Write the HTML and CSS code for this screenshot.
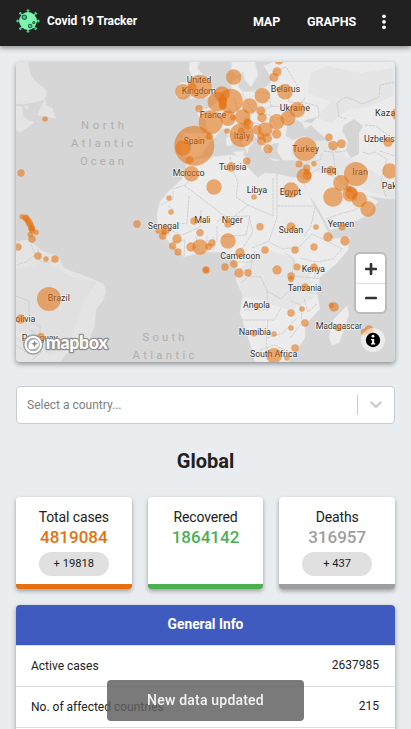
FILE: index.html
```html
<!DOCTYPE html>
<html lang="en">
<head>
<meta charset="utf-8">
<title>Covid 19 Tracker</title>
<link rel="stylesheet" href="styles.css">
</head>
<body>
<header class="navbar">
  <a class="brand">
    <svg class="brand-icon" viewBox="0 0 24 24">
      <g stroke="#3fd692" stroke-width="1.3" stroke-linecap="round">
        <path d="M12 1.5v21M1.5 12h21M4.2 4.2l15.6 15.6M19.8 4.2L4.2 19.8"/>
        <path d="M11.4 1.4h1.2M11.4 22.6h1.2M1.4 11.4v1.2M22.6 11.4v1.2M3.8 4.6l.8-.8M19.4 3.8l.8.8M3.8 19.4l.8.8M20.2 19.4l-.8.8" stroke-width="1.8"/>
      </g>
      <circle cx="12" cy="12" r="8.9" fill="#7df5ac"/>
      <g fill="#43c98a" stroke="#256b51" stroke-width="1.1">
        <circle cx="8.3" cy="8.2" r="2.2"/><circle cx="14.2" cy="17" r="1.8"/><circle cx="17.8" cy="13.6" r="1.1"/>
      </g>
    </svg>
    <span>Covid 19 Tracker</span>
  </a>
  <nav class="nav-links">
    <a class="link-map">MAP</a>
    <a class="link-graphs">GRAPHS</a>
    <svg class="more" viewBox="0 0 4 16"><circle cx="2" cy="2.3" r="1.9"/><circle cx="2" cy="7.8" r="1.9"/><circle cx="2" cy="13.3" r="1.9"/></svg>
  </nav>
</header>
<main>
  <section class="map">
    <svg class="map-canvas" viewBox="16 62 379 300">
      <g class="land">
        <path class="land-west" d="M16 62H28L30 74 36 82 46 90 46 97 40 101 30 103 16 104Z"/>
        <path class="land-west" d="M45 99L46 106 52 108 55 118 49 117 38 115 41 107Z"/>
        <path class="land-west" d="M16 106l6 1 1 9 6 5 5 1-6 5-8 5-4-3zM24 106l4 1-1 2z"/>
        <path class="land-west" d="M16 242L27 240 36 246 44 252 58 256 63 267 70 271 90 278 103 284 106 291 103 300 96 309 94 327 88 341 73 348 65 355 60 362H16Z"/>
        <path d="M190 62L200 62 197 68 203 75 207 83 214 90 210 97 199 98 190 99 195 93 190 87 194 79 189 70Z"/>
        <path d="M180 83l7-1 2 9-5 6-8 1 1-9z"/>
        <path d="M238 62H255L258 75 251 87 245 80 243 72 237 75 231 70 232 62Z"/>
        <path d="M395 62H274L264 66 269 74 273 79 266 87 255 91 243 92 238 87 239 78 232 81 231 91 223 98 215 104 207 109 196 109 198 115 207 121 205 134 184 133 181 145 182 155 190 159 202 155 207 146 215 137 222 129 230 129 237 139 244 145 247 153 249 147 253 143 246 136 239 127 243 124 251 132 259 140 263 151 269 154 268 147 274 143 279 143 277 151 283 160 292 160 302 161 306 165 304 181 308 194 317 206 324 219 330 230 343 226 358 220 369 214 378 201 366 195 360 190 355 197 346 189 343 181 350 184 358 192 369 196 382 198 395 199Z"/>
        <path d="M233 152l11-1-1 6-6-2zM226 138l5-1 1 8-5 1zM227 132l3-1v5l-2 1zM269 158l11 2-5 1zM295 163l6-2-3 4z"/>
        <path d="M188 160L205 158 228 155 246 156 247 167 258 178 264 173 277 174 290 177 302 178 305 187 313 204 321 218 328 232 331 239 350 237 348 250 336 264 320 277 317 294 320 309 305 325 305 338 297 349 288 362H255L250 343 240 313 243 296 236 280 237 265 231 255 221 252 202 252 184 257 172 245 158 230 157 214 160 202 168 192 182 179Z"/>
        <path d="M347 306l2 8-5 15-5 14-7 2-3-8 4-17z"/>
      </g>
      <g class="relief">
        <path d="M16 270l28-8 28 15 25 5-14 20-12 35-20 20-20-22-15-5z"/>
        <path d="M237 270l27-21 25 7 20 17 5 25-24 12-29-9-19-5z"/>
        <path d="M291 146l36-9 20 20 24 13 23 15v14l-29-9-31-14-29-7-14-12z"/>
        <path d="M310 73l17-7 34 7 32-5v28l-24 11-20 2-18 14-15-5 14-16-22-9z"/>
      </g>
      <g class="water">
        <path d="M287 125L297 120 302 123 305 129 311 125 318 132 328 140 316 141 304 136 293 140 286 136Z"/>
        <path d="M344 125l10-6 9 7-4 7 0 7 0 14-8 4-5-8 2-9-6-10z"/>
        <path d="M303 122l5-3 8-1-4 5zM308 268l3-1 1 6-4 1zM298 280l3 13-2-1z"/>
      </g>
      <g class="borders">
        <path d="M184 136l5 1v17M205 137l12 3M220 98l12 15-5 12M234 98l4 13M242 93l12 20-13 6M254 92l15 1 2 14-12 5M269 85l10 5 9-6 1 18 12 1 5-6M273 72l13-5 8 13 6 10M271 106l14 1 5 11M257 113l13 2 7 12M301 102l17 4 1 10-9 5M250 122l9 2 4 9M262 134l13-3"/>
        <path d="M395 82l-15 3-1 12-16 7-17-7-9 6 2 14 8 2M365 125l11 1 19 15M363 152l6 2 6-2 12 7-6 22 5 16M380 151l15 5M324 151l9 1 2 17 7 12M305 163l15-3 2-7M305 177l15-9 15 10 8 5M326 140l10 12 11-1M326 219l17-6 12-3 13-8M355 201l7-4"/>
        <path d="M192 176l-6 9-14 4M173 191v8l-12 6M185 186l45 34 18-15M230 157l3 14 5 11-2 15 12 8 25 11V178M277 174v43M277 206h37M189 196l-2 27-20 2M168 206l6 4M201 210l-1 17-18 8-12-5M217 226v16M217 222l6-5 27-1-4 19-24 2M249 217l4 15-12 19M277 217l-8 24-17 7M315 207l-4 19-7 10M269 242l13 7 17-2 13-13 17 8 13 7-9 10-17 3-16-4M184 256l1-16-14 2M198 251l-2-15M207 250v-15M214 250l-1-13"/>
        <path d="M238 262h13l4-11M252 260l-2 15-9 8M285 253l9 6-4 31-9 9-14-8-6-14-15-1M294 276l27 3M290 289l29 5M267 291l1 19h-24M241 320h33l7-12M268 320l-2 22 3 17M267 338l16-5 14-15M291 301l10 4 1 18-12 15M304 299l4 13 9-8M260 350l14-5 11 5M314 264l1 14"/>
        <path d="M31 244l4 11-9 7-10 3M38 249l2 12 9 2 7-4M16 296l13 5v14l-8 7M29 322l11 4v10l-11-7M16 338l12 8 10-3 3 9-9 8M16 345l13 9"/>
      </g>
      <g class="labels">
        <text x="186.7" y="83" textLength="24.6">United</text>
        <text x="181.7" y="94" textLength="34.3">Kingdom</text>
        <text x="199.7" y="118" textLength="26.5">France</text>
        <text x="183.7" y="144" textLength="21">Spain</text>
        <text x="233.7" y="139" textLength="16.2">Italy</text>
        <text x="219" y="170" textLength="27.5">Tunisia</text>
        <text x="172.7" y="176" textLength="32">Morocco</text>
        <text x="246.7" y="193" textLength="20.5">Libya</text>
        <text x="270.7" y="92" textLength="29.5">Belarus</text>
        <text x="279.7" y="111.3" textLength="30.3">Ukraine</text>
        <text x="375" y="116.3" textLength="48">Kazakhstan</text>
        <text x="364" y="142.3" textLength="43">Uzbekistan</text>
        <text x="292.3" y="152.3" textLength="26.7">Turkey</text>
        <text x="321.3" y="173.3" textLength="15">Iraq</text>
        <text x="352.3" y="175.2" textLength="15.7">Iran</text>
        <text x="381.7" y="189.3" textLength="35">Pakistan</text>
        <text x="279.7" y="194.6" textLength="21.5">Egypt</text>
        <text x="47.7" y="300.7" textLength="22.3">Brazil</text>
        <text x="9.8" y="322.2" textLength="25.5">Bolivia</text>
        <text x="21.7" y="341" textLength="36">Paraguay</text>
        <text x="147.7" y="229.2" textLength="31.3">Senegal</text>
        <text x="194.3" y="223" textLength="16">Mali</text>
        <text x="221.7" y="223" textLength="21">Niger</text>
        <text x="220.3" y="259.3" textLength="40">Cameroon</text>
        <text x="243" y="308" textLength="27">Angola</text>
        <text x="238.7" y="335" textLength="32.3">Namibia</text>
        <text x="250" y="357.3" textLength="47.3">South Africa</text>
        <text x="278.7" y="233.3" textLength="24.6">Sudan</text>
        <text x="327.7" y="227.2" textLength="26.6">Yemen</text>
        <text x="301.7" y="271.7" textLength="23.3">Kenya</text>
        <text x="287.7" y="290.8" textLength="34">Tanzania</text>
        <text x="315.7" y="329.3" textLength="46.3">Madagascar</text>
      </g>
      <g class="ocean">
        <text x="81" y="129" textLength="43">North</text>
        <text x="71" y="147" textLength="62">Atlantic</text>
        <text x="80" y="165" textLength="44">Ocean</text>
        <text x="142.5" y="341" textLength="42">South</text>
        <text x="132.5" y="359" textLength="62">Atlantic</text>
      </g>
      <g class="cases">
        <circle cx="45" cy="119" r="2.8"/><circle cx="21" cy="173" r="3.7"/>
        <circle cx="233.7" cy="77" r="7.7"/><circle cx="199.7" cy="86.7" r="12"/><circle cx="183" cy="91.7" r="7.7"/><circle cx="192.7" cy="86.7" r="3.7"/>
        <circle cx="217.3" cy="101.7" r="9.8"/><circle cx="222" cy="94" r="7.7"/><circle cx="230.5" cy="101" r="12.3"/><circle cx="222.7" cy="101" r="3.8"/><circle cx="222.7" cy="106" r="3.8"/>
        <circle cx="262.3" cy="95.7" r="7.7"/><circle cx="199" cy="108.7" r="3.7"/><circle cx="210.7" cy="122.3" r="12"/><circle cx="228" cy="118.3" r="7.7"/><circle cx="233" cy="117.7" r="2.8"/>
        <circle cx="249.7" cy="106" r="7.7"/><circle cx="242.7" cy="117" r="7.7"/><circle cx="260.7" cy="110.7" r="4.5"/><circle cx="262" cy="117.7" r="4.7"/><circle cx="248.3" cy="124.5" r="5"/><circle cx="247.3" cy="121.7" r="3.7"/>
        <circle cx="227" cy="131" r="2.8"/><circle cx="241.7" cy="135" r="12"/><circle cx="241" cy="131" r="3.3"/><circle cx="241" cy="139" r="2.3"/><circle cx="256.7" cy="129.7" r="4.7"/><circle cx="265.3" cy="129.5" r="7.3"/><circle cx="276.7" cy="121.7" r="7.7"/>
        <circle cx="276.7" cy="134" r="4.7"/><circle cx="261.7" cy="141" r="4.5"/><circle cx="267.3" cy="138.3" r="4.7"/><circle cx="260.7" cy="136" r="3.7"/><circle cx="268" cy="149" r="4.7"/>
        <circle cx="194.3" cy="145.7" r="20"/><circle cx="183" cy="148" r="7.7"/><circle cx="189.7" cy="160" r="3.8"/><circle cx="209.3" cy="136.3" r="3.5"/><circle cx="246.7" cy="161" r="3.8"/><circle cx="231" cy="167" r="4.7"/>
        <circle cx="191.3" cy="173.7" r="7.7"/><circle cx="214" cy="187" r="7.7"/><circle cx="169" cy="198" r="2.8"/><circle cx="254" cy="197" r="2.8"/>
        <circle cx="279" cy="60" r="4.7"/><circle cx="277" cy="71.7" r="4.5"/><circle cx="274" cy="77.3" r="4.5"/><circle cx="285" cy="91.7" r="7.7"/><circle cx="297.3" cy="109.7" r="7.7"/><circle cx="288" cy="118.3" r="7.5"/>
        <circle cx="305" cy="149" r="12"/><circle cx="329" cy="137.3" r="3.7"/><circle cx="333" cy="145.7" r="4.8"/><circle cx="341.3" cy="143.7" r="4.5"/><circle cx="388" cy="142.3" r="4.7"/><circle cx="398" cy="114" r="6.5"/>
        <circle cx="299" cy="164" r="3.5"/><circle cx="314" cy="163.7" r="2.7"/><circle cx="306.7" cy="168" r="3.7"/><circle cx="304" cy="176" r="7.5"/><circle cx="307.3" cy="175.5" r="4.5"/><circle cx="307" cy="172" r="3"/>
        <circle cx="330.7" cy="170.7" r="4.7"/><circle cx="356" cy="174" r="12"/><circle cx="390" cy="171" r="7.7"/><circle cx="341" cy="183" r="7.9"/><circle cx="333" cy="197" r="9.8"/><circle cx="350.3" cy="194" r="7.7"/><circle cx="351" cy="193.5" r="6"/><circle cx="349" cy="189" r="3"/><circle cx="359.3" cy="199.5" r="7.7"/><circle cx="368" cy="209" r="7.7"/><circle cx="291" cy="190" r="7.7"/>
        <circle cx="137" cy="224" r="3.7"/><circle cx="22" cy="216.7" r="2.7"/><circle cx="25.7" cy="217.7" r="3.3"/><circle cx="26.3" cy="218.5" r="3.2"/><circle cx="28" cy="220.7" r="3.3"/><circle cx="29.3" cy="222.7" r="3.5"/><circle cx="30.5" cy="225" r="3.3"/><circle cx="31.7" cy="228" r="3.5"/><circle cx="31.7" cy="228.5" r="3"/><circle cx="32" cy="230.5" r="3"/><circle cx="36" cy="232.3" r="2.8"/><circle cx="30.3" cy="234.5" r="2.8"/><circle cx="32" cy="239" r="3.8"/>
        <circle cx="18" cy="247" r="3.7"/><circle cx="38" cy="256" r="3.8"/><circle cx="46" cy="259" r="2.8"/><circle cx="55" cy="259" r="3.8"/><circle cx="49" cy="299" r="12"/><circle cx="20.7" cy="319" r="4.7"/><circle cx="41" cy="336.7" r="3.7"/>
        <circle cx="171" cy="212" r="2.8"/><circle cx="194" cy="221" r="3.7"/><circle cx="228" cy="224" r="3.7"/><circle cx="260" cy="226.7" r="3.7"/><circle cx="200" cy="232.7" r="3.7"/>
        <circle cx="158.3" cy="231" r="2.8"/><circle cx="165.5" cy="230" r="4.7"/><circle cx="164" cy="232" r="3"/><circle cx="162.7" cy="236" r="3.7"/><circle cx="177" cy="239" r="4.7"/><circle cx="172.7" cy="246" r="3.7"/><circle cx="178" cy="252" r="3.7"/>
        <circle cx="191" cy="247" r="4.7"/><circle cx="200" cy="247" r="7.7"/><circle cx="209" cy="246.5" r="3.5"/><circle cx="212" cy="243" r="3.7"/><circle cx="228" cy="241" r="7.7"/><circle cx="240" cy="252.7" r="4.7"/><circle cx="265" cy="250" r="3.8"/>
        <circle cx="234" cy="264" r="3.8"/><circle cx="225" cy="267" r="3.7"/><circle cx="206" cy="270" r="3.7"/><circle cx="206" cy="270" r="2.9"/><circle cx="239" cy="273" r="4.7"/><circle cx="248" cy="272.7" r="3.7"/><circle cx="277" cy="270" r="4.7"/>
        <circle cx="257.3" cy="306" r="2.8"/><circle cx="254" cy="333.7" r="2.8"/><circle cx="274" cy="334" r="2.8"/><circle cx="274" cy="355.7" r="7.7"/>
        <circle cx="291" cy="227" r="4.7"/><circle cx="316" cy="227" r="2.8"/><circle cx="342" cy="226.7" r="3.7"/><circle cx="328" cy="237" r="4.7"/><circle cx="345" cy="241" r="4.7"/><circle cx="314" cy="247" r="3.7"/><circle cx="295" cy="250" r="3.7"/>
        <circle cx="297" cy="267" r="3.5"/><circle cx="314" cy="267.3" r="3.8"/><circle cx="291" cy="276" r="3.7"/><circle cx="291" cy="279" r="3"/><circle cx="305" cy="287" r="3.7"/><circle cx="334" cy="307" r="4.7"/><circle cx="331.3" cy="305.3" r="2.7"/>
        <circle cx="291" cy="313" r="3.7"/><circle cx="302" cy="309" r="2.8"/><circle cx="305" cy="323" r="3.7"/><circle cx="291" cy="328" r="2.8"/><circle cx="338.3" cy="327.7" r="3.5"/><circle cx="369" cy="330" r="4.7"/><circle cx="364" cy="332" r="3.3"/><circle cx="295" cy="348" r="3.8"/><circle cx="287" cy="358" r="2.8"/>
      </g>
      <g class="map-logo">
        <circle cx="33.2" cy="344.5" r="9.2" fill="#bbb" fill-opacity=".4" stroke="#8f8f8f" stroke-opacity=".8" stroke-width="2"/>
        <circle cx="33.2" cy="344.5" r="7.7" fill="#a9a9a9" stroke="#fff" stroke-width="2"/>
        <path d="M28.9 348.8c-1.2-4.4.6-9.4 5.4-9.4 2.8 0 4.7 2 4.7 4.4 0 4.2-5 6.6-10.1 5z" fill="#fff"/>
        <path d="M34.6 340.3l1 2.5 2.5 1-2.5 1-1 2.5-1-2.5-2.5-1 2.5-1z" fill="#8f8f8f"/>
        <text x="45.8" y="349" textLength="62">mapbox</text>
      </g>
    </svg>
    <div class="zoom-controls">
      <button aria-label="Zoom in"><svg viewBox="0 0 12 12"><path d="M6 1.2v9.6M1.2 6h9.6"/></svg></button>
      <button aria-label="Zoom out"><svg viewBox="0 0 12 12"><path d="M1.2 6h9.6"/></svg></button>
    </div>
    <div class="attribution"><svg viewBox="0 0 16 16"><circle cx="8" cy="8" r="7.2"/><circle cx="8" cy="4.2" r="1.4" fill="#fff"/><path d="M6 7h3.2v4.3h1v1.3H6v-1.3h1V8.3H6z" fill="#fff"/></svg></div>
  </section>

  <div class="select">
    <span>Select a country...</span>
    <div class="select-arrow"><svg viewBox="0 0 12 8"><path d="M1.4 1.5L6 5.9l4.6-4.4"/></svg></div>
  </div>

  <h1>Global</h1>

  <section class="stats">
    <article class="stat total"><h2>Total cases</h2><strong>4819084</strong><span class="chip">+ 19818</span></article>
    <article class="stat recovered"><h2>Recovered</h2><strong>1864142</strong></article>
    <article class="stat deaths"><h2>Deaths</h2><strong>316957</strong><span class="chip">+ 437</span></article>
  </section>

  <section class="info">
    <h3>General Info</h3>
    <div class="row"><span>Active cases</span><b>2637985</b></div>
    <div class="row"><span>No. of affected countries</span><b>215</b></div>
    <div class="row"></div>
  </section>
</main>
<div class="toast">New data updated</div>
</body>
</html>
```
FILE: styles.css
```css
* { box-sizing: border-box; }
html, body { height: 100%; overflow: hidden; }
body {
  margin: 0;
  background: #e9edf0;
  color: #212121;
  font-family: Roboto, "Liberation Sans", sans-serif;
}
.navbar {
  display: flex;
  align-items: center;
  justify-content: space-between;
  height: 46px;
  padding: 0 25px 3px 16px;
  background: #212121;
  color: #fff;
  box-shadow: 0 2px 5px rgba(0, 0, 0, .4);
}
.brand { display: flex; align-items: center; gap: 7px; font-size: 12px; font-weight: 700; letter-spacing: -.06px; }
.brand span { margin-top: -2px; }
.brand-icon { width: 24px; height: 24px; margin-top: -1px; }
.nav-links { display: flex; align-items: center; font-size: 12.5px; font-weight: 700; letter-spacing: -.1px; }
.link-graphs { margin: 0 26px 0 27px; }
.more { width: 4px; height: 16px; fill: #fff; }

main { padding: 16px; }
.map {
  position: relative;
  height: 300px;
  border-radius: 4px;
  overflow: hidden;
  background: #d6d6d6;
  box-shadow: 0 2px 5px rgba(0, 0, 0, .4);
}
.map-canvas { display: block; width: 379px; height: 300px; }
.land { fill: #ececec; stroke: #e5e5e5; stroke-width: .6; stroke-linejoin: round; }
.land-west { fill: #e4e4e4; }
.relief { fill: #dcdcdc; opacity: .4; }
.water { fill: #d5d5d5; }
.borders { fill: none; stroke: #c4c4c4; stroke-width: .7; stroke-dasharray: 3 .7; stroke-linejoin: round; }
.labels {
  font-size: 9px;
  font-weight: 400;
  fill: #333;
  stroke: #f0f0f0;
  stroke-width: 1.6px;
  paint-order: stroke;
  stroke-linejoin: round;
}
.ocean { font-size: 11.3px; fill: #afafaf; }
.cases { fill: #e6700e; fill-opacity: .56; }
.map-logo text {
  font-family: Lato, sans-serif;
  font-size: 18px;
  font-weight: 900;
  fill: #fff;
  stroke: #8f8f8f;
  stroke-width: 2.6px;
  stroke-linejoin: round;
  paint-order: stroke;
}
.zoom-controls {
  position: absolute;
  right: 10px;
  bottom: 50px;
  width: 29px;
  border-radius: 4px;
  background: #fff;
  box-shadow: 0 0 0 2px rgba(0, 0, 0, .12);
}
.zoom-controls button {
  display: flex;
  align-items: center;
  justify-content: center;
  width: 29px;
  height: 29px;
  padding: 0;
  border: 0;
  background: none;
}
.zoom-controls button + button { border-top: 1px solid #ddd; }
.zoom-controls svg { width: 12px; height: 12px; stroke: #333; stroke-width: 2.7; stroke-linecap: round; }
.attribution {
  position: absolute;
  right: 10px;
  bottom: 10px;
  display: grid;
  place-items: center;
  width: 24px;
  height: 24px;
  border-radius: 50%;
  background: rgba(255, 255, 255, .55);
}
.attribution svg { width: 16px; height: 16px; }

.select {
  display: flex;
  align-items: center;
  justify-content: space-between;
  height: 38px;
  margin-top: 24px;
  padding-left: 10px;
  border: 1px solid #ccc;
  border-radius: 4px;
  background: #fff;
  color: #808080;
  font-size: 12px;
}
.select-arrow {
  display: grid;
  place-items: center;
  width: 37px;
  height: 20px;
  border-left: 1px solid #ccc;
}
.select-arrow svg { width: 12px; height: 8px; fill: none; stroke: #ccc; stroke-width: 2.3; stroke-linecap: round; }

h1 { margin: 25px 0 24px; font-size: 20px; line-height: 24px; font-weight: 700; text-align: center; }

.stats { display: grid; grid-template-columns: repeat(3, 1fr); gap: 16px; }
.stat {
  display: flex;
  flex-direction: column;
  align-items: center;
  height: 92px;
  padding-top: 11px;
  border-bottom: 5px solid;
  border-radius: 4px;
  background: #fff;
  box-shadow: 0 2px 4px rgba(0, 0, 0, .34);
}
.stat h2 { margin: 0; color: #212121; font-size: 14px; line-height: 19px; font-weight: 400; letter-spacing: -.12px; }
.stat strong { font-size: 17px; line-height: 21px; font-weight: 500; }
.total { color: #e6700e; }
.recovered { color: #4caf50; }
.deaths { color: #9e9e9e; }
.chip {
  width: 70px;
  height: 24px;
  margin-top: 4px;
  border-radius: 12px;
  background: #e0e0e0;
  color: #212121;
  font-size: 11.2px;
  line-height: 23px;
  text-align: center;
}

.info { margin-top: 16px; border-radius: 4px; background: #fff; box-shadow: 0 2px 5px rgba(0, 0, 0, .34); }
.info h3 {
  margin: 0;
  border-radius: 4px 4px 0 0;
  background: #3f5bc0;
  color: #fff;
  font-size: 13.8px;
  line-height: 39px;
  height: 40px;
  font-weight: 700;
  text-align: center;
}
.row {
  display: flex;
  align-items: center;
  justify-content: space-between;
  height: 41px;
  padding: 0 16px 0 15px;
  border-top: 1px solid #ddd;
  font-size: 12px;
}
.row b { padding-bottom: 2px; font-weight: 400; }
.toast {
  position: fixed;
  left: 107px;
  bottom: 8px;
  width: 197px;
  height: 41px;
  border-radius: 4px;
  background: rgba(97, 97, 97, .84);
  color: #f3f3f3;
  font-size: 14px;
  font-weight: 500;
  letter-spacing: .2px;
  line-height: 40px;
  text-align: center;
}
```
